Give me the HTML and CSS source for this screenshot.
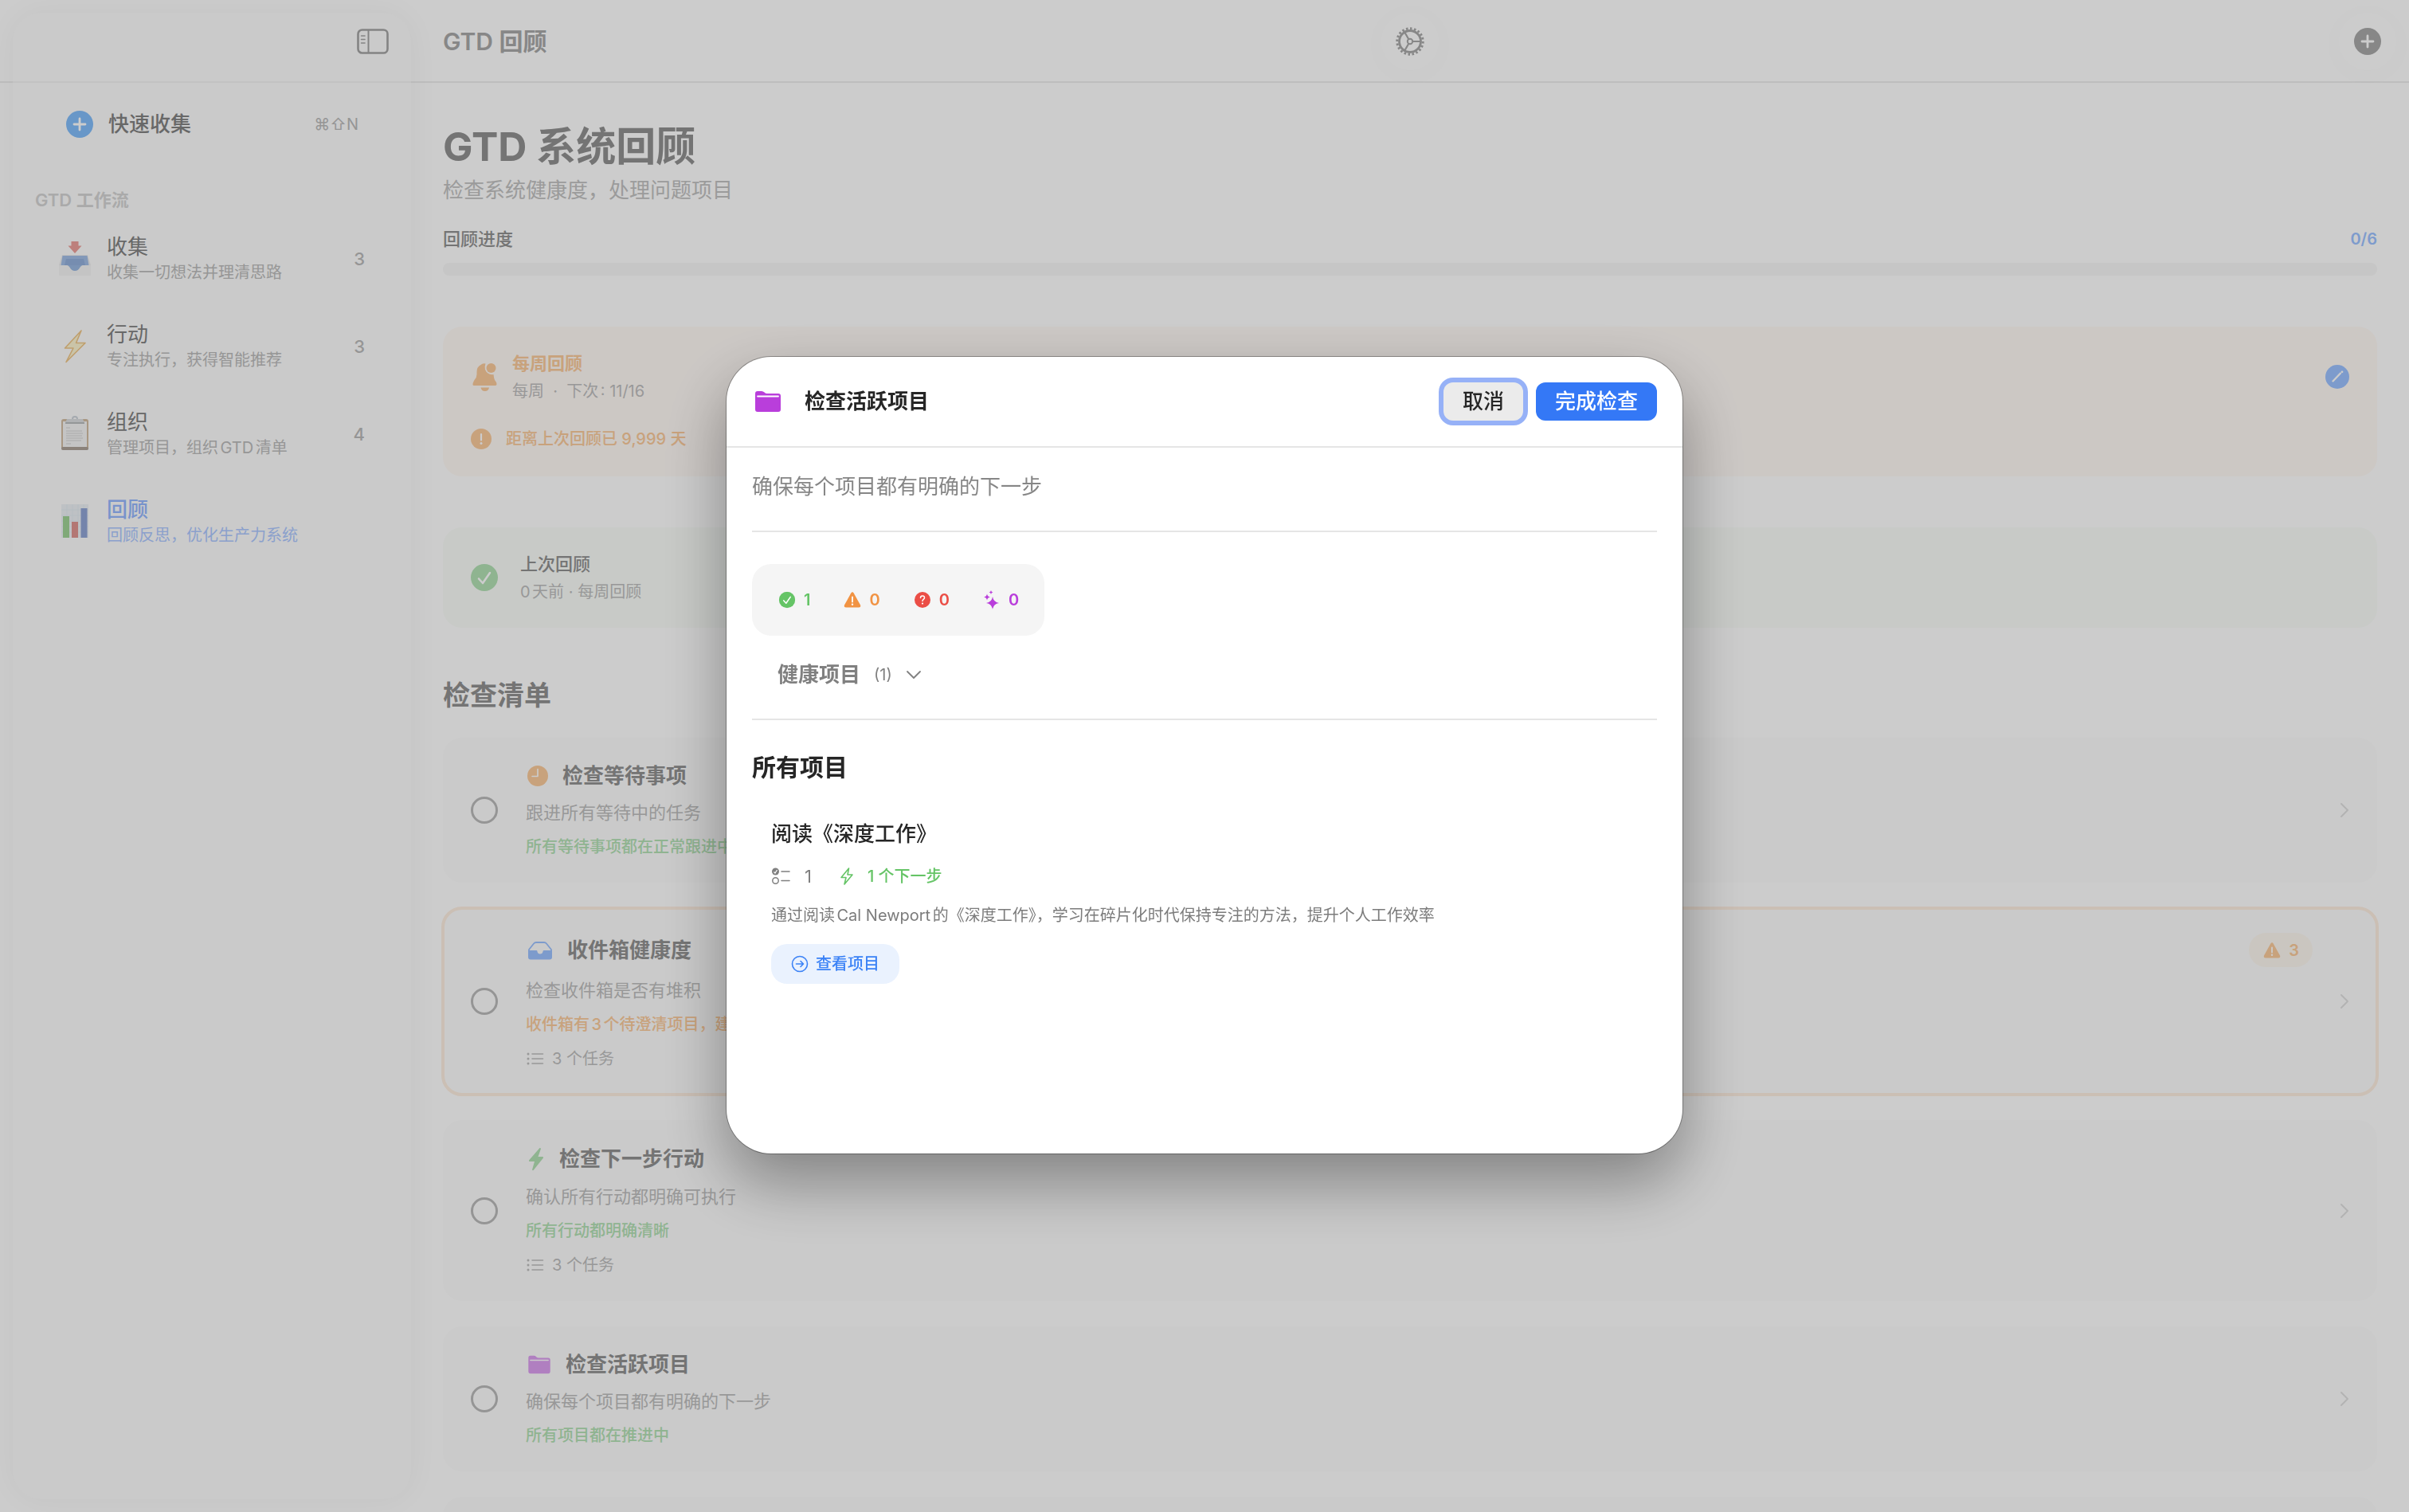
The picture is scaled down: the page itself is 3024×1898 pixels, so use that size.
FILE: index.html
```
<!DOCTYPE html>
<html lang="zh-CN">

<head>
    <meta charset="UTF-8">
    <meta name="viewport" content="width=device-width, initial-scale=1.0">
    <title>GTD 回顾</title>
    <link rel="stylesheet" href="styles.css">
</head>

<body>
    <svg class="symbols" aria-hidden="true">
        <symbol id="folder" viewBox="0 0 34 28">
            <path d="M1 4Q1 1 4 1H9Q11 1 12.500 2.500Q14 4 16 4H30Q33 4 33 7V24Q33 27 30 27H4Q1 27 1 24Z" fill="currentColor" />
            <path d="M4 7.500H30" stroke="#fff" stroke-width="1.800" stroke-linecap="round" />
        </symbol>
        <symbol id="plus-circle" viewBox="0 0 34 34">
            <circle cx="17" cy="17" r="17" fill="currentColor" />
            <path d="M17 10V24M10 17H24" stroke="#fff" stroke-width="2.800" stroke-linecap="round" />
        </symbol>
        <symbol id="check-circle" viewBox="0 0 34 34">
            <circle cx="17" cy="17" r="17" fill="currentColor" />
            <path d="M10 18.500L15 24L24 11" fill="none" stroke="#fff" stroke-width="2.600" stroke-linecap="round" stroke-linejoin="round" />
        </symbol>
        <symbol id="warning" viewBox="0 0 24 22">
            <path d="M10.300 2.500Q12 0 13.700 2.500L22 17.500Q23 20.500 20 20.500H4Q1 20.500 2 17.500Z" fill="currentColor" />
            <path d="M12 7.500V13.500" stroke="#fff" stroke-width="1.800" stroke-linecap="round" />
            <circle cx="12" cy="16.800" r="1.200" fill="#fff" />
        </symbol>
        <symbol id="list" viewBox="0 0 24 20">
            <g fill="currentColor">
                <circle cx="3" cy="4" r="1.500" />
                <circle cx="3" cy="10" r="1.500" />
                <circle cx="3" cy="16" r="1.500" />
            </g>
            <path d="M8 4H21.500M8 10H21.500M8 16H21.500" stroke="currentColor" stroke-width="1.600" stroke-linecap="round" />
        </symbol>
        <symbol id="chevron" viewBox="0 0 12 20">
            <path d="M2 2L10 10L2 18" fill="none" stroke="currentColor" stroke-width="2" stroke-linecap="round" stroke-linejoin="round" />
        </symbol>
    </svg>

    <div class="app">
        <aside class="sidebar">
            <div class="sidebar-head">
                <button class="icon-btn" aria-label="切换边栏">
                    <svg width="40" height="32" viewBox="0 0 40 32" fill="none" stroke="currentColor">
                        <rect x="1.500" y="1.500" width="37" height="29" rx="5" stroke-width="2.600" />
                        <path d="M14.500 2V30" stroke-width="2" />
                        <path d="M5.500 9H10M5.500 13.500H10M5.500 18H10" stroke-width="1.600" stroke-linecap="round" />
                    </svg>
                </button>
            </div>
            <a class="quick" href="#">
                <svg class="quick-icon" width="34" height="34"><use href="#plus-circle" /></svg>
                <span class="quick-text">快速收集</span>
                <span class="shortcut">⌘⇧N</span>
            </a>
            <div class="section">GTD 工作流</div>
            <nav>
                <a class="nav-item" href="#">
                    <svg class="emoji" width="44" height="44" viewBox="0 0 44 44">
                        <path d="M17.500 1H26.500V6.500H30.500L22 16L13.500 6.500H17.500Z" fill="#e0574c" />
                        <path d="M6 18H38L42 31V42Q42 44 40 44H4Q2 44 2 42V31Z" fill="#dfe0e2" />
                        <path d="M6.500 19H37.500L39.500 31H4.500Z" fill="#5b8cd6" />
                        <path d="M11 23H33L35 31H9Z" fill="#3f74c4" />
                        <path d="M2 31H12Q14 31 15.500 33.500Q18 38 22 38Q26 38 28.500 33.500Q30 31 32 31H42V42Q42 44 40 44H4Q2 44 2 42Z" fill="#f2f2f2" />
                        <path d="M12.500 31H31.500Q30 31 28.500 33.500Q26 38 22 38Q18 38 15.500 33.500Q14 31 12.500 31Z" fill="#4a80cc" />
                    </svg>
                    <span class="nav-text"><b>收集</b><small>收集一切想法并理清思路</small></span>
                    <span class="count">3</span>
                </a>
                <a class="nav-item" href="#">
                    <svg class="emoji" width="44" height="44" viewBox="0 0 44 44">
                        <path d="M30 3L9.500 25H20L11 42.500L35 18.500H23.500Z" fill="#fdf0b0" stroke="#e59b2c" stroke-width="1.600" stroke-linejoin="round" />
                    </svg>
                    <span class="nav-text"><b>行动</b><small>专注执行，获得智能推荐</small></span>
                    <span class="count">3</span>
                </a>
                <a class="nav-item" href="#">
                    <svg class="emoji" width="44" height="44" viewBox="0 0 44 44">
                        <rect x="5" y="4" width="34" height="39" rx="3" fill="#b08a5a" />
                        <rect x="5" y="39" width="34" height="4" rx="2" fill="#6e5a48" />
                        <rect x="7" y="7" width="30" height="32" fill="#f0f0f0" />
                        <path d="M11 15H16M11 19H31M11 22H32M11 25H31M11 28H32M11 31H30M11 35H17" stroke="#d2d2d2" stroke-width="1.800" />
                        <path d="M19 4Q19 1 22 1Q25 1 25 4" fill="none" stroke="#a9b4c0" stroke-width="2" />
                        <path d="M12 4H32L34 9H10Z" fill="#c4c8cc" />
                        <path d="M10 9H34" stroke="#85898e" stroke-width="2" />
                    </svg>
                    <span class="nav-text"><b>组织</b><small>管理项目，组织GTD清单</small></span>
                    <span class="count">4</span>
                </a>
                <a class="nav-item active" href="#">
                    <svg class="emoji" width="44" height="44" viewBox="0 0 44 44">
                        <rect x="5" y="1" width="34" height="42" fill="#e2eaf1" />
                        <path d="M5 8H39M5 15H39M5 22H39M5 29H39M5 36H39M12 1V43M19 1V43M26 1V43M33 1V43" stroke="#d2e0ea" stroke-width="1" />
                        <rect x="7" y="16" width="8" height="27" fill="#57b344" />
                        <rect x="18" y="23" width="8" height="20" fill="#c9413c" />
                        <rect x="29.500" y="6" width="8" height="37" fill="#3b5fb8" />
                    </svg>
                    <span class="nav-text"><b>回顾</b><small>回顾反思，优化生产力系统</small></span>
                </a>
            </nav>
        </aside>

        <main class="main">
            <header class="toolbar">
                <div class="toolbar-title">GTD 回顾</div>
                <button class="round-btn" aria-label="设置">
                    <svg width="36" height="36" viewBox="0 0 36 36" fill="none" stroke="currentColor">
                        <circle cx="18" cy="18" r="16.200" stroke-width="3" pathLength="40" stroke-dasharray="1 1" />
                        <circle cx="18" cy="18" r="13.500" stroke-width="2.800" />
                        <circle cx="18" cy="18" r="3.200" stroke-width="2" />
                        <path d="M21.500 18H31M16.200 15L11.400 6.700M16.200 21L11.400 29.300" stroke-width="2.200" />
                    </svg>
                </button>
                <button class="round-btn add" aria-label="新建">
                    <svg width="34" height="34"><use href="#plus-circle" /></svg>
                </button>
            </header>

            <div class="content">
                <h1>GTD 系统回顾</h1>
                <p class="lead">检查系统健康度，处理问题项目</p>
                <div class="progress-row">
                    <label for="progress">回顾进度</label>
                    <span class="progress-num">0/6</span>
                </div>
                <progress id="progress" value="0" max="6"></progress>

                <section class="card reminder">
                    <div class="card-row">
                        <svg class="orange" width="34" height="38" viewBox="0 0 34 38" fill="currentColor">
                            <path d="M18.500 2.500Q15 1.500 12.500 4Q7.500 6.500 7.500 13V16Q7.500 20 4.500 23L3 26Q1.500 30 4 30H30.500Q33.500 30 32 26L30 23Q28.800 20 28.500 16Q21 17 18 10Q17 6 18.500 2.500Z" />
                            <circle cx="25.500" cy="8" r="6" />
                            <path d="M12.500 32.500H23Q22 37 17.800 37Q13.500 37 12.500 32.500Z" />
                        </svg>
                        <div class="card-text">
                            <div class="card-title orange">每周回顾</div>
                            <div class="card-sub">每周&nbsp; ·&nbsp; 下次: 11/16</div>
                        </div>
                        <button class="icon-btn edit" aria-label="编辑">
                            <svg width="30" height="30" viewBox="0 0 30 30">
                                <circle cx="15" cy="15" r="15" fill="currentColor" />
                                <path d="M9.500 20.500L19 10.500" stroke="#fff" stroke-width="2.400" stroke-linecap="round" />
                                <circle cx="21" cy="8.800" r="1.400" fill="#fff" />
                            </svg>
                        </button>
                    </div>
                    <div class="alert orange">
                        <svg width="26" height="26" viewBox="0 0 26 26">
                            <circle cx="13" cy="13" r="13" fill="currentColor" />
                            <path d="M13 7V14.500" stroke="#fff" stroke-width="2.200" stroke-linecap="round" />
                            <circle cx="13" cy="18.500" r="1.500" fill="#fff" />
                        </svg>
                        <span>距离上次回顾已 9,999 天</span>
                    </div>
                </section>

                <section class="card last">
                    <div class="card-row">
                        <svg class="green" width="34" height="34"><use href="#check-circle" /></svg>
                        <div class="card-text">
                            <div class="card-title">上次回顾</div>
                            <div class="card-sub">0天前 · 每周回顾</div>
                        </div>
                    </div>
                </section>

                <h2>检查清单</h2>
                <div class="checklist">
                    <div class="check-card">
                        <input type="checkbox" id="c1">
                        <div class="check-body">
                            <div class="check-head">
                                <svg class="orange" width="30" height="30" viewBox="0 0 30 30">
                                    <circle cx="15" cy="15" r="13" fill="currentColor" />
                                    <path d="M15 6.500V15.500H8" fill="none" stroke="#fff" stroke-width="1.600" stroke-linecap="round" stroke-linejoin="round" />
                                </svg>
                                <label for="c1">检查等待事项</label>
                            </div>
                            <p class="desc">跟进所有等待中的任务</p>
                            <p class="status green">所有等待事项都在正常跟进中</p>
                        </div>
                        <svg class="go" width="12" height="20"><use href="#chevron" /></svg>
                    </div>
                    <div class="check-card warn">
                        <input type="checkbox" id="c2">
                        <div class="check-body">
                            <div class="check-head">
                                <svg class="blue" width="36" height="26" viewBox="0 0 36 26">
                                    <path d="M4 13V12L10 4.500Q11.200 3 13 3H23Q24.800 3 26 4.500L32 12V13" fill="none" stroke="currentColor" stroke-width="1.800" stroke-linejoin="round" />
                                    <path d="M3 13H13.500Q14.500 13 14.500 14.500Q15 17.500 18 17.500Q21 17.500 21.500 14.500Q21.500 13 22.500 13H33V21.500Q33 24.500 30 24.500H6Q3 24.500 3 21.500Z" fill="currentColor" />
                                </svg>
                                <label for="c2">收件箱健康度</label>
                                <span class="badge"><svg width="24" height="22"><use href="#warning" /></svg>3</span>
                            </div>
                            <p class="desc">检查收件箱是否有堆积</p>
                            <p class="status orange">收件箱有3个待澄清项目，建议尽快处理</p>
                            <p class="tasks"><svg width="24" height="20"><use href="#list" /></svg>3 个任务</p>
                        </div>
                        <svg class="go" width="12" height="20"><use href="#chevron" /></svg>
                    </div>
                    <div class="check-card">
                        <input type="checkbox" id="c3">
                        <div class="check-body">
                            <div class="check-head">
                                <svg class="green" width="26" height="36" viewBox="0 0 26 36">
                                    <path d="M17.500 4L4 19.500Q3.500 21 5 21H11L8 31.500Q9 33 10 31.500L22 16.500Q22.500 15 21 15H15.500L19 5Q18.500 3.500 17.500 4Z" fill="currentColor" />
                                </svg>
                                <label for="c3">检查下一步行动</label>
                            </div>
                            <p class="desc">确认所有行动都明确可执行</p>
                            <p class="status green">所有行动都明确清晰</p>
                            <p class="tasks"><svg width="24" height="20"><use href="#list" /></svg>3 个任务</p>
                        </div>
                        <svg class="go" width="12" height="20"><use href="#chevron" /></svg>
                    </div>
                    <div class="check-card">
                        <input type="checkbox" id="c4">
                        <div class="check-body">
                            <div class="check-head">
                                <svg class="purple" width="34" height="24"><use href="#folder" /></svg>
                                <label for="c4">检查活跃项目</label>
                            </div>
                            <p class="desc">确保每个项目都有明确的下一步</p>
                            <p class="status green">所有项目都在推进中</p>
                        </div>
                        <svg class="go" width="12" height="20"><use href="#chevron" /></svg>
                    </div>
                    <div class="check-card"></div>
                </div>
            </div>
        </main>
    </div>

    <div class="mask">
        <div class="modal" role="dialog" aria-labelledby="modal-title">
            <header class="modal-head">
                <svg class="modal-icon" width="34" height="28"><use href="#folder" /></svg>
                <h3 id="modal-title">检查活跃项目</h3>
                <button class="btn cancel">取消</button>
                <button class="btn primary">完成检查</button>
            </header>
            <div class="modal-body">
                <p class="modal-desc">确保每个项目都有明确的下一步</p>
                <hr>
                <div class="stats">
                    <span class="stat ok">
                        <svg width="24" height="24" viewBox="-3 -3 40 40"><use href="#check-circle" width="34" height="34" /></svg>1
                    </span>
                    <span class="stat warning">
                        <svg width="24" height="22"><use href="#warning" /></svg>0
                    </span>
                    <span class="stat danger">
                        <svg width="24" height="24" viewBox="0 0 24 24">
                            <circle cx="12" cy="12" r="10" fill="currentColor" />
                            <path d="M9.500 9.500Q9.500 7 12 7Q14.500 7 14.500 9.200Q14.500 10.500 13.200 11.300Q12 12.100 12 13.500" fill="none" stroke="#fff" stroke-width="1.500" stroke-linecap="round" />
                            <circle cx="12" cy="16.600" r="1.100" fill="#fff" />
                        </svg>0
                    </span>
                    <span class="stat star">
                        <svg width="24" height="26" viewBox="0 0 24 26" fill="currentColor">
                            <path d="M13 9Q14 15.800 21 17Q14 18.200 13 25Q12 18.200 5 17Q12 15.800 13 9Z" />
                            <path d="M6 5.500Q6.500 9 10 9.500Q6.500 10 6 13.500Q5.500 10 2 9.500Q5.500 9 6 5.500Z" />
                            <path d="M11 1Q11.300 3.200 13.500 3.500Q11.300 3.800 11 6Q10.700 3.800 8.500 3.500Q10.700 3.200 11 1Z" />
                        </svg>0
                    </span>
                </div>
                <button class="fold">
                    健康项目<span>(1)</span>
                    <svg width="20" height="12" viewBox="0 0 20 12" fill="none" stroke="currentColor" stroke-width="1.800" stroke-linecap="round" stroke-linejoin="round">
                        <path d="M2 2L10 10L18 2" />
                    </svg>
                </button>
                <hr>
                <h4>所有项目</h4>
                <div class="project">
                    <div class="project-name">阅读《深度工作》</div>
                    <div class="meta">
                        <svg width="24" height="24" viewBox="0 0 24 24" fill="none" stroke="currentColor">
                            <circle cx="5.500" cy="6" r="4.500" fill="currentColor" stroke="none" />
                            <path d="M3.500 6.500L5 8L7.500 4" stroke="#fff" stroke-width="1.200" />
                            <circle cx="5.500" cy="17.500" r="3.700" stroke-width="1.500" />
                            <path d="M13 6H23M13 17.500H23" stroke-width="1.600" stroke-linecap="round" />
                        </svg>
                        <span class="meta-num">1</span>
                        <svg class="next" width="20" height="24" viewBox="0 0 20 24">
                            <path d="M12.500 2L3 13.500H9L7 22L17 10H11Z" fill="none" stroke="currentColor" stroke-width="1.600" stroke-linejoin="round" />
                        </svg>
                        <span class="next">1 个下一步</span>
                    </div>
                    <p class="project-desc">通过阅读Cal Newport的《深度工作》，学习在碎片化时代保持专注的方法，提升个人工作效率</p>
                    <a class="view" href="#">
                        <svg width="22" height="22" viewBox="0 0 22 22" fill="none" stroke="currentColor" stroke-width="1.600" stroke-linecap="round" stroke-linejoin="round">
                            <circle cx="11" cy="11" r="9.500" />
                            <path d="M6.500 11H15.500M12 7.500L15.500 11L12 14.500" />
                        </svg>
                        查看项目
                    </a>
                </div>
            </div>
        </div>
    </div>
</body>

</html>
```

FILE: styles.css
```
* {
    box-sizing: border-box;
}

body {
    margin: 0;
    font-family: Inter, 'Noto Sans CJK SC', 'DejaVu Sans', sans-serif;
    font-size: 20px;
    line-height: 26px;
    color: #929292;
    text-autospace: normal;
    overflow: hidden;
}

h1,
h2,
h3,
h4,
p {
    margin: 0;
}

a {
    color: inherit;
    text-decoration: none;
}

button {
    font-family: inherit;
    color: inherit;
    border: 0;
    background: none;
    padding: 0;
}

svg {
    display: block;
    flex: none;
}

.symbols {
    position: absolute;
    width: 0;
    height: 0;
}

.orange {
    color: #fbcb9c;
}

.green {
    color: #b3e1b5;
}

.blue {
    color: #9dc2ff;
}

.purple {
    color: #dc9ff0;
}

.app {
    display: flex;
    height: 100vh;
    overflow: hidden;
    background: #fff linear-gradient(#eee, #eee) 0 102px / 100% 2px no-repeat;
}

/* 边栏 */
.sidebar {
    position: relative;
    z-index: 1;
    flex: none;
    width: 500px;
    margin: 16px 0 16px 16px;
    border-radius: 36px;
    background: #fdfdfd;
    box-shadow: 0 0 40px rgba(0, 0, 0, 0.04);
}

.sidebar-head {
    display: flex;
    justify-content: flex-end;
    align-items: center;
    height: 88px;
    padding: 0 28px 14px 0;
    border-bottom: 2px solid #f3f3f3;
    color: #a5a5a5;
}

.quick {
    display: flex;
    align-items: center;
    height: 60px;
    margin-top: 22px;
    padding: 0 66px 0 67px;
}

.quick-icon {
    color: #82bdfb;
}

.quick-text {
    flex: 1;
    margin-left: 19px;
    font-size: 26px;
    font-weight: 500;
    color: #828282;
}

.shortcut {
    color: #bbb;
}

.section {
    margin-top: 51px;
    padding-left: 28px;
    font-size: 22px;
    line-height: 28px;
    font-weight: 600;
    color: #d5d5d5;
}

nav {
    margin-top: 5px;
}

.nav-item {
    display: flex;
    align-items: center;
    height: 110px;
    padding: 0 58px 0 56px;
}

.emoji {
    margin-bottom: 2px;
    opacity: 0.55;
}

.nav-text {
    display: flex;
    flex: 1;
    flex-direction: column;
    margin-left: 18px;
    white-space: nowrap;
}

.nav-text b {
    font-size: 26px;
    line-height: 34px;
    font-weight: 400;
    color: #828282;
}

.nav-text small {
    font-size: 20px;
    line-height: 30px;
    color: #bcbcbc;
}

.count {
    font-size: 22px;
    font-weight: 500;
    color: #bbb;
}

.nav-item.active b {
    font-weight: 500;
    color: #96b8fe;
}

.nav-item.active small {
    color: #aec9ff;
}

/* 主区域 */
.main {
    flex: 1;
    min-width: 0;
}

.toolbar {
    display: grid;
    grid-template-columns: 1fr auto 1fr;
    align-items: center;
    height: 104px;
}

.toolbar-title {
    padding-left: 40px;
    font-size: 30px;
    line-height: 40px;
    font-weight: 600;
    color: #a9a9a9;
}

.round-btn {
    display: flex;
    justify-content: center;
    align-items: center;
    width: 72px;
    height: 72px;
    border-radius: 50%;
    color: #a9a9a9;
    box-shadow: 0 4px 50px rgba(0, 0, 0, 0.02);
}

.add {
    justify-self: end;
    margin-right: 16px;
}

.content {
    padding: 50px 40px 0;
}

h1 {
    font-size: 50px;
    line-height: 60px;
    font-weight: 700;
}

.lead {
    margin-top: 8px;
    font-size: 26px;
    line-height: 34px;
    color: #c2c2c2;
}

.progress-row {
    display: flex;
    justify-content: space-between;
    margin-top: 30px;
    font-size: 22px;
    line-height: 28px;
    font-weight: 500;
}

.progress-num {
    font-size: 20px;
    font-weight: 600;
    color: #9dc2ff;
}

progress {
    display: block;
    appearance: none;
    width: 100%;
    height: 16px;
    margin-top: 16px;
    border: 0;
    border-radius: 8px;
    background: #f8f8f8;
    overflow: hidden;
}

progress::-webkit-progress-bar {
    background: #f8f8f8;
}

.card {
    margin-top: 64px;
    padding: 32px 35px;
    border-radius: 24px;
}

.reminder {
    padding-bottom: 34px;
    background: #fffaf6;
}

.last {
    background: #fafdf9;
}

.card-row {
    display: flex;
    align-items: center;
}

.card-text {
    flex: 1;
    margin-left: 18px;
}

.last .card-text {
    margin-left: 28px;
}

.card-title {
    font-size: 22px;
    line-height: 28px;
    font-weight: 500;
}

.card-title.orange {
    font-weight: 600;
}

.card-sub {
    margin-top: 8px;
    color: #bfbfbf;
}

.edit {
    color: #9dc2ff;
}

.alert {
    display: flex;
    align-items: center;
    gap: 18px;
    margin-top: 34px;
    font-weight: 500;
}

h2 {
    margin-top: 64px;
    font-size: 34px;
    line-height: 42px;
    font-weight: 600;
}

.checklist {
    display: flex;
    flex-direction: column;
    gap: 32px;
    margin-top: 32px;
}

.check-card {
    display: flex;
    align-items: center;
    min-height: 182px;
    padding: 31px 35px;
    border-radius: 24px;
    background: #fdfdfd;
}

.warn {
    outline: 4px solid #feefe2;
    outline-offset: -2px;
}

.check-card input {
    appearance: none;
    flex: none;
    width: 34px;
    height: 34px;
    margin: 0;
    border: 3px solid #bbb;
    border-radius: 50%;
}

.check-body {
    display: flex;
    flex: 1;
    flex-direction: column;
    gap: 15px;
    margin-left: 35px;
    line-height: 28px;
}

.check-head {
    display: flex;
    align-items: center;
    gap: 16px;
    min-height: 34px;
    font-size: 26px;
    font-weight: 600;
}

.badge {
    display: flex;
    align-items: center;
    gap: 9px;
    height: 43px;
    margin-left: auto;
    margin-right: 34px;
    padding: 0 17px;
    border-radius: 22px;
    background: #fdf8f0;
    font-size: 20px;
    color: #fbcb9c;
}

.desc {
    font-size: 22px;
    color: #bfbfbf;
}

.status {
    font-weight: 500;
}

.tasks {
    display: flex;
    align-items: center;
    gap: 9px;
    color: #bfbfbf;
}

.go {
    color: #e0e0e0;
}

/* 弹窗 */
.mask {
    position: fixed;
    z-index: 10;
    inset: 0;
    display: flex;
    justify-content: center;
    align-items: center;
    padding-bottom: 2px;
    background: rgba(0, 0, 0, 0.2);
}

.modal {
    width: 1200px;
    min-height: 1000px;
    border-radius: 56px;
    background: #fff;
    color: #262626;
    box-shadow: 0 0 0 1px rgba(0, 0, 0, 0.3), 0 36px 80px rgba(0, 0, 0, 0.36);
}

.modal-head {
    display: flex;
    align-items: center;
    height: 114px;
    padding: 0 32px 0 35px;
    border-bottom: 2px solid #e5e5e5;
}

.modal-icon {
    color: #b93edb;
}

.modal-head h3 {
    flex: 1;
    margin-left: 29px;
    font-size: 26px;
    line-height: 34px;
    font-weight: 600;
}

.btn {
    height: 48px;
    margin-left: 16px;
    padding: 0 24px;
    border-radius: 12px;
    font-size: 26px;
    line-height: 34px;
    font-weight: 500;
}

.cancel {
    background: #ebebeb;
    box-shadow: 0 0 0 6px #96b1f7;
}

.primary {
    background: #3478f6;
    color: #fff;
}

.modal-body {
    padding: 32px;
}

.modal-desc {
    font-size: 26px;
    line-height: 34px;
    color: #868686;
}

hr {
    height: 2px;
    margin: 38px 0 40px;
    border: 0;
    background: #e5e5e5;
}

.stats {
    display: flex;
    align-items: center;
    gap: 41px;
    width: fit-content;
    height: 90px;
    padding: 0 32px;
    border-radius: 24px;
    background: #f5f5f5;
}

.stat {
    display: flex;
    align-items: center;
    gap: 9px;
    font-weight: 600;
}

.ok {
    color: #65c466;
}

.warning {
    color: #f19343;
}

.danger {
    color: #eb4e46;
}

.star {
    color: #b93edb;
}

.fold {
    display: flex;
    align-items: center;
    gap: 17px;
    margin-top: 32px;
    padding-left: 32px;
    font-size: 26px;
    line-height: 34px;
    font-weight: 600;
    color: #808080;
}

.fold span {
    font-size: 20px;
    font-weight: 400;
}

h4 {
    font-size: 30px;
    line-height: 38px;
    font-weight: 600;
}

.project {
    display: flex;
    flex-direction: column;
    align-items: flex-start;
    gap: 23px;
    margin-top: 24px;
    padding: 24px;
}

.project-name {
    font-size: 26px;
    line-height: 34px;
    font-weight: 500;
}

.meta {
    display: flex;
    align-items: center;
    color: #808080;
}

.meta-num {
    margin: 0 34px 0 18px;
    font-size: 22px;
}

.meta .next {
    color: #65c466;
    font-weight: 500;
}

.meta span.next {
    margin-left: 16px;
}

.project-desc {
    color: #7c7c7c;
}

.view {
    display: flex;
    align-items: center;
    gap: 9px;
    height: 50px;
    padding: 0 25px;
    border-radius: 20px;
    background: #eaf2fe;
    font-weight: 500;
    color: #3b82f6;
}
```
